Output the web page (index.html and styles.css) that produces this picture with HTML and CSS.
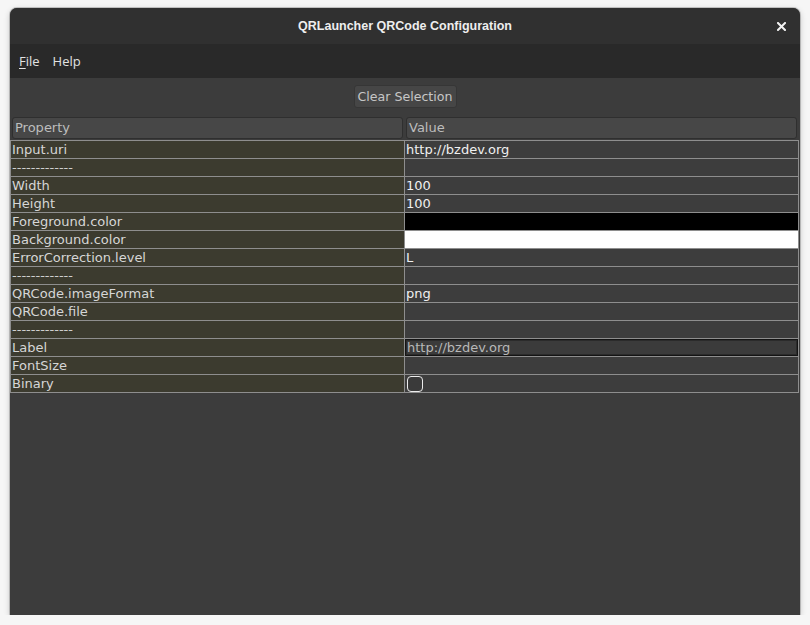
FILE: index.html
```html
<!DOCTYPE html>
<html>
<head>
<meta charset="utf-8">
<link rel="stylesheet" href="styles.css">
</head>
<body>
<div class="window">
  <div class="titlebar">
    <span class="title">QRLauncher QRCode Configuration</span>
    <span class="close"><svg width="9" height="9" viewBox="0 0 9 9"><path d="M1 1L8 8M8 1L1 8" stroke="#f2f2f2" stroke-width="2" stroke-linecap="square"/></svg></span>
  </div>
  <div class="menubar">
    <span class="menu"><u>F</u>ile</span>
    <span class="menu">Help</span>
  </div>
  <div class="content">
    <div class="toolbar"><button class="btn">Clear Selection</button></div>
    <div class="header">
      <div class="hcell">Property</div>
      <div class="hcell">Value</div>
    </div>
    <div class="grid">
      <div class="k">Input.uri</div><div class="v">http://bzdev.org</div>
      <div class="k sep">-------------</div><div class="v"></div>
      <div class="k">Width</div><div class="v">100</div>
      <div class="k">Height</div><div class="v">100</div>
      <div class="k">Foreground.color</div><div class="v black"></div>
      <div class="k">Background.color</div><div class="v white"></div>
      <div class="k">ErrorCorrection.level</div><div class="v">L</div>
      <div class="k sep">-------------</div><div class="v"></div>
      <div class="k">QRCode.imageFormat</div><div class="v">png</div>
      <div class="k">QRCode.file</div><div class="v"></div>
      <div class="k sep">-------------</div><div class="v"></div>
      <div class="k">Label</div><div class="v edit"><span class="field">http://bzdev.org</span></div>
      <div class="k">FontSize</div><div class="v"></div>
      <div class="k">Binary</div><div class="v"><span class="check"></span></div>
    </div>
  </div>
</div>
</body>
</html>
```
FILE: styles.css
```css
html, body {
  margin: 0;
  padding: 0;
  background: #f6f6f6;
}
body {
  padding: 8px 0 0 10px;
}
.window {
  width: 790px;
  height: 607px;
  border-radius: 7px 7px 0 0;
  overflow: hidden;
  background: #3c3c3c;
  box-shadow: 0 0 0 1px rgba(0,0,0,0.18), 0 2px 6px rgba(0,0,0,0.22);
  display: flex;
  flex-direction: column;
}
.titlebar {
  height: 36px;
  flex: none;
  background: #303030;
  display: flex;
  align-items: center;
  justify-content: center;
  position: relative;
}
.title {
  font-family: "Liberation Sans", Arial, sans-serif;
  font-weight: bold;
  font-size: 12.5px;
  color: #eeeeee;
}
.close {
  position: absolute;
  right: 14px;
  top: 14px;
  width: 9px;
  height: 9px;
  display: flex;
}
.menubar {
  height: 34px;
  flex: none;
  background: #292929;
  display: flex;
  align-items: center;
  gap: 13px;
  padding-left: 9px;
  font-family: "Open Sans", sans-serif;
  font-size: 13px;
  color: #e2e2e2;
}
.menu u {
  text-decoration-thickness: 1px;
  text-underline-offset: 2px;
}
.content {
  flex: 1;
  background: #3c3c3c;
  font-family: "DejaVu Sans", sans-serif;
  font-size: 13px;
}
.toolbar {
  display: flex;
  justify-content: center;
  align-items: flex-start;
  padding-top: 7px;
  height: 31px;
}
.btn {
  height: 23px;
  width: 103px;
  padding: 0;
  background: #464646;
  border: 1px solid #363636;
  border-radius: 3px;
  color: #c6c6c6;
  font-family: "DejaVu Sans", sans-serif;
  font-size: 12.6px;
}
.header {
  display: grid;
  grid-template-columns: 393px 393px;
  column-gap: 1px;
  padding: 0 1px;
  width: 789px;
  box-sizing: border-box;
}
.hcell {
  margin: 1px;
  height: 22px;
  box-sizing: border-box;
  background: #474747;
  border: 1px solid #2f2f2f;
  border-radius: 3px;
  color: #bdbdbd;
  line-height: 20px;
  padding-left: 2px;
}
.grid {
  width: 789px;
  box-sizing: border-box;
  display: grid;
  grid-template-columns: 393px 393px;
  gap: 1px;
  padding: 1px;
  background: #8e8e8e;
}
.k, .v {
  height: 17px;
  line-height: 17px;
  padding-left: 1px;
  white-space: nowrap;
  overflow: hidden;
}
.k {
  background: #3c3b2f;
  color: #d6d6d6;
}
.v {
  background: #3d3d3d;
  color: #f0f0f0;
}
.sep {
  color: #cfcfcf;
}
.black { background: #000000; }
.white { background: #ffffff; }
.edit {
  padding: 0;
  display: flex;
}
.field {
  flex: 1;
  box-sizing: border-box;
  border: 1px solid #141414;
  box-shadow: inset 0 0 0 1px #2b2b2b;
  background: #3b3b3b;
  color: #b8b8b8;
  line-height: 15px;
  padding-left: 1px;
}
.v .check {
  display: block;
  width: 16px;
  height: 16px;
  box-sizing: border-box;
  margin: 1px 0 0 1px;
  border: 1.5px solid #ececec;
  border-radius: 4px;
  background: #3a3a3a;
}
```
